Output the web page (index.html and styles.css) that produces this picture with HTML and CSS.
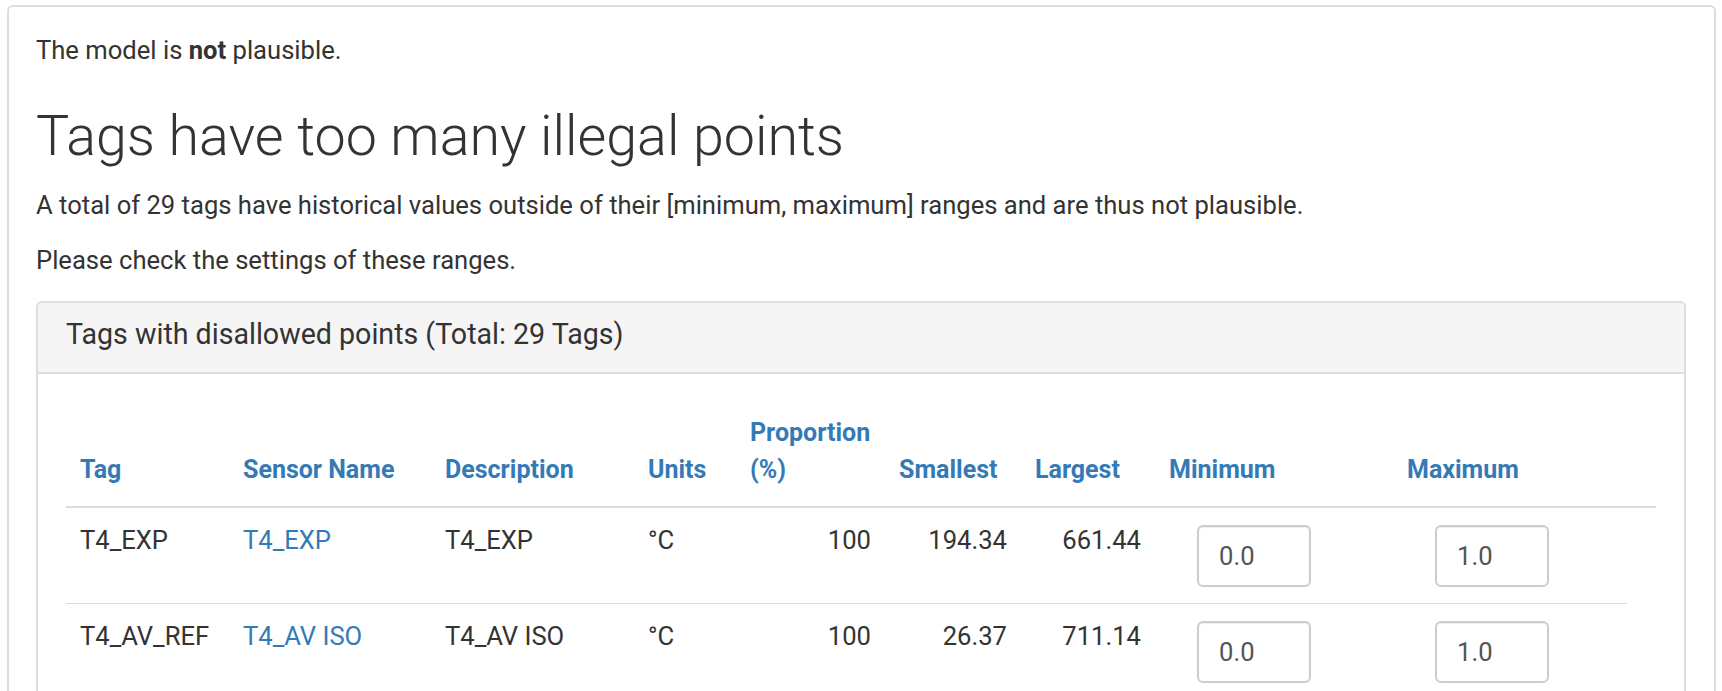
FILE: index.html
```html
<!DOCTYPE html>
<html lang="en">
<head>
    <meta charset="UTF-8">
    <meta name="viewport" content="width=device-width, initial-scale=1.0">
    <title>Plausibility check</title>
    <link rel="stylesheet" href="styles.css">
</head>
<body>
    <div class="page">
        <div class="card">
            <p>The model is <strong>not</strong> plausible.</p>
            <h1>Tags have too many illegal points</h1>
            <p>A total of 29 tags have historical values outside of their [minimum, maximum] ranges and are thus not plausible.</p>
            <p>Please check the settings of these ranges.</p>

            <div class="panel">
                <div class="panel-heading">Tags with disallowed points (Total: 29 Tags)</div>
                <div class="panel-body">
                    <table class="range-table">
                        <thead>
                            <tr>
                                <th class="col-tag">Tag</th>
                                <th class="col-sensor">Sensor Name</th>
                                <th class="col-desc">Description</th>
                                <th class="col-units">Units</th>
                                <th class="col-prop">Proportion (%)</th>
                                <th class="col-small">Smallest</th>
                                <th class="col-large">Largest</th>
                                <th class="col-min">Minimum</th>
                                <th class="col-max">Maximum</th>
                                <th></th>
                            </tr>
                        </thead>
                        <tbody>
                            <tr>
                                <td>T4_EXP</td>
                                <td><a href="#">T4_EXP</a></td>
                                <td>T4_EXP</td>
                                <td>°C</td>
                                <td class="num">100</td>
                                <td class="num">194.34</td>
                                <td class="num">661.44</td>
                                <td><input class="range-input" type="text" value="0.0"></td>
                                <td><input class="range-input" type="text" value="1.0"></td>
                            </tr>
                            <tr>
                                <td>T4_AV_REF</td>
                                <td><a href="#">T4_AV ISO</a></td>
                                <td>T4_AV ISO</td>
                                <td>°C</td>
                                <td class="num">100</td>
                                <td class="num">26.37</td>
                                <td class="num">711.14</td>
                                <td><input class="range-input" type="text" value="0.0"></td>
                                <td><input class="range-input" type="text" value="1.0"></td>
                            </tr>
                        </tbody>
                    </table>
                </div>
            </div>
        </div>
    </div>
</body>
</html>
```

FILE: styles.css
```css
body {
    margin: 0;
    font-family: Roboto, "Liberation Sans", sans-serif;
    font-size: 25.6px;
    line-height: 37.5px;
    color: #333;
    background-color: #fff;
}

.page {
    padding: 5px 6px 0 7px;
}

.card {
    border: 2px solid #ddd;
    border-radius: 6px;
    padding: 25px 28px 40px 27px;
}

p {
    margin: 0 0 17.5px;
}

h1 {
    font-size: 55.6px;
    font-weight: 300;
    line-height: 60.5px;
    margin: 36px 0 21px;
}

a {
    color: #337ab7;
    text-decoration: none;
}

.panel {
    border: 2px solid #ddd;
    border-radius: 6px;
    margin-top: 21px;
}

.panel-heading {
    background-color: #f5f5f5;
    border-bottom: 2px solid #ddd;
    border-radius: 4px 4px 0 0;
    padding: 14px 28px 20px;
    font-size: 28.6px;
    line-height: 35px;
}

.panel-body {
    padding: 28px;
}

.range-table {
    width: 100%;
    border-collapse: collapse;
    table-layout: fixed;
}

.range-table th {
    box-sizing: border-box;
    color: #337ab7;
    font-size: 25px;
    font-weight: 700;
    text-align: left;
    vertical-align: bottom;
    padding: 12px 14px 17px;
    border-bottom: 2px solid #ddd;
}

.range-table td {
    vertical-align: top;
    padding: 14px;
    border-top: 1px solid #ddd;
}

.col-tag { width: 163px; }
.col-sensor { width: 202px; }
.col-desc { width: 203px; }
.col-units { width: 102px; }
.col-prop { width: 149px; }
.col-small { width: 136px; }
.col-large { width: 134px; }
.col-min { width: 238px; }
.col-max { width: 234px; }

.num {
    text-align: right;
}

.range-input {
    display: block;
    box-sizing: border-box;
    width: 114px;
    height: 62px;
    margin: 3px 0 2px 28px;
    padding: 0 20px;
    border: 2px solid #ccc;
    border-radius: 6px;
    box-shadow: inset 0 1px 1px rgba(0, 0, 0, 0.075);
    font: inherit;
    color: #555;
}
```
